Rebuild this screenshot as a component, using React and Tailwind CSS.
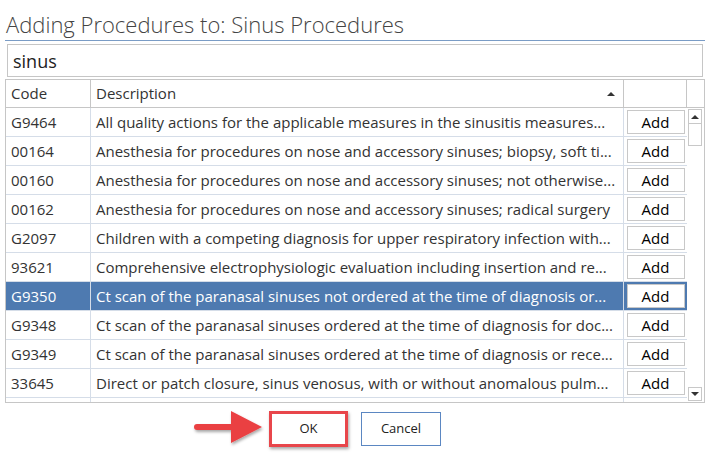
import React from 'react'

const ROWS = [
  ['G9464', 'All quality actions for the applicable measures in the sinusitis measures...'],
  ['00164', 'Anesthesia for procedures on nose and accessory sinuses; biopsy, soft ti...'],
  ['00160', 'Anesthesia for procedures on nose and accessory sinuses; not otherwise...'],
  ['00162', 'Anesthesia for procedures on nose and accessory sinuses; radical surgery'],
  ['G2097', 'Children with a competing diagnosis for upper respiratory infection with...'],
  ['93621', 'Comprehensive electrophysiologic evaluation including insertion and re...'],
  ['G9350', 'Ct scan of the paranasal sinuses not ordered at the time of diagnosis or...'],
  ['G9348', 'Ct scan of the paranasal sinuses ordered at the time of diagnosis for doc...'],
  ['G9349', 'Ct scan of the paranasal sinuses ordered at the time of diagnosis or rece...'],
  ['33645', 'Direct or patch closure, sinus venosus, with or without anomalous pulm...'],
  ['', ''],
]

const SELECTED = 'G9350'

function Row({ code, desc }) {
  const sel = code === SELECTED
  return (
    <div className={`flex h-[29px] shrink-0 border-b border-[#d5dde8] ${sel ? 'bg-[#4e7ab0] text-white' : 'text-[#333]'}`}>
      <div className="w-[85px] shrink-0 border-r border-[#d5dde8] pl-[5px] flex items-center">{code}</div>
      <div className="w-[533px] shrink-0 border-r border-[#d5dde8] pl-[5px] flex items-center whitespace-nowrap overflow-hidden">{desc}</div>
      <div className="flex-1 flex items-center justify-center">
        {code && (
          <button className="w-[58px] h-[24px] bg-white border border-[#c8c8c8] text-black text-[15px] leading-none">Add</button>
        )}
        {!code && <div className="w-[58px] h-[24px] mt-[8px] bg-white border border-[#c8c8c8]" />}
      </div>
    </div>
  )
}

function Arrow() {
  return (
    <svg width="80" height="40" viewBox="0 0 80 40" className="mr-[2px]">
      <defs>
        <filter id="sh" x="-20%" y="-20%" width="140%" height="160%">
          <feDropShadow dx="1" dy="2" stdDeviation="1.5" floodColor="#000" floodOpacity="0.35" />
        </filter>
      </defs>
      <g filter="url(#sh)">
        <path d="M10 15 L44 15 L44 2 L75 18 L44 34 L44 21 L10 21 A3 3 0 0 1 10 15 Z" fill="#ea3f43" />
      </g>
    </svg>
  )
}

export default function App() {
  return (
    <div className="w-[710px] h-[453px] bg-white px-[5px] overflow-hidden" style={{ fontFamily: '"Open Sans", sans-serif' }}>
      <div className="h-[41px] border-b border-[#7a9cc6] flex items-end pb-[5px]">
        <h1 className="text-[22px] font-light text-[#444] leading-none pl-[1px]">Adding Procedures to: Sinus Procedures</h1>
      </div>

      <div className="mx-[2px] mt-[3px] h-[33px] border border-[#c6c6c6] flex items-center pl-[5px] pt-[2px] text-[18px] text-[#222]">
        sinus
      </div>

      <div className="mt-[2px] border border-[#c6c6c6] text-[15px]">
        <div className="flex h-[28px] border-b border-[#c6c6c6] text-[#333]">
          <div className="w-[85px] shrink-0 border-r border-[#c6c6c6] pl-[5px] flex items-center">Code</div>
          <div className="w-[533px] shrink-0 border-r border-[#c6c6c6] pl-[5px] pr-[8px] flex items-center justify-between">
            <span>Description</span>
            <span className="w-0 h-0 border-l-[4px] border-r-[4px] border-b-[4px] border-l-transparent border-r-transparent border-b-[#333]" />
          </div>
          <div className="w-[63px] shrink-0 border-r border-[#c6c6c6]" />
          <div className="flex-1" />
        </div>

        <div className="flex h-[294px]">
          <div className="w-[681px] shrink-0 flex flex-col overflow-hidden">
            {ROWS.map((r, i) => (
              <Row key={i} code={r[0]} desc={r[1]} />
            ))}
          </div>
          <div className="flex-1 flex flex-col pl-[1px] pr-[2px] pt-[1px] pb-[1px]">
            <div className="h-[14px] border border-[#c8c8c8] border-b-0 flex items-center justify-center">
              <span className="w-0 h-0 border-l-[4px] border-r-[4px] border-b-[4px] border-l-transparent border-r-transparent border-b-[#333]" />
            </div>
            <div className="h-[23px] border border-[#c8c8c8]" />
            <div className="flex-1" />
            <div className="h-[14px] border border-[#c8c8c8] flex items-center justify-center">
              <span className="w-0 h-0 border-l-[4px] border-r-[4px] border-t-[4px] border-l-transparent border-r-transparent border-t-[#333]" />
            </div>
          </div>
        </div>
      </div>

      <div className="flex items-center justify-center mt-[6px] pr-[2px]">
        <div className="flex items-center -ml-[80px]">
          <Arrow />
          <button className="w-[79px] h-[36px] border-[3px] border-[#e8464b] shadow-[1px_2px_3px_rgba(0,0,0,0.35)] bg-white text-[13px] text-[#222]">OK</button>
          <button className="ml-[13px] w-[80px] h-[34px] border border-[#5b87c2] bg-white text-[13px] text-[#222]">Cancel</button>
        </div>
      </div>
    </div>
  )
}
